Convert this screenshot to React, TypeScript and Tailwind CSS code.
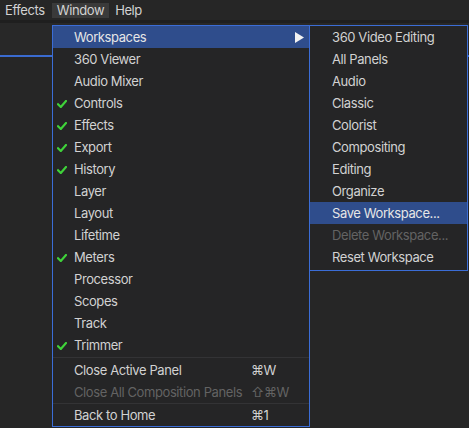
import React from "react";

type Item = { label: string; check?: boolean; shortcut?: string; disabled?: boolean; sub?: boolean; active?: boolean };

const main: Item[] = [
  { label: "Workspaces", sub: true, active: true },
  { label: "360 Viewer" },
  { label: "Audio Mixer" },
  { label: "Controls", check: true },
  { label: "Effects", check: true },
  { label: "Export", check: true },
  { label: "History", check: true },
  { label: "Layer" },
  { label: "Layout" },
  { label: "Lifetime" },
  { label: "Meters", check: true },
  { label: "Processor" },
  { label: "Scopes" },
  { label: "Track" },
  { label: "Trimmer", check: true },
];

const subItems: Item[] = [
  { label: "360 Video Editing" },
  { label: "All Panels" },
  { label: "Audio" },
  { label: "Classic" },
  { label: "Colorist" },
  { label: "Compositing" },
  { label: "Editing" },
  { label: "Organize" },
  { label: "Save Workspace...", active: true },
  { label: "Delete Workspace...", disabled: true },
  { label: "Reset Workspace" },
];

function Check() {
  return (
    <svg width="10" height="8" viewBox="0 0 10 8" className="block">
      <path d="M1 4.2 L3.8 7 L9 1" fill="none" stroke="#3fd23a" strokeWidth="2.2" strokeLinecap="square" />
    </svg>
  );
}

function Row({ it, left }: { it: Item; left: number }) {
  return (
    <div
      className={`relative flex items-center h-[22px] pt-[1px] ${it.active ? "bg-[#2f4d8c] text-[#e6e6e6]" : ""} ${
        it.disabled ? "text-[#636363]" : "text-[#d2d2d2]"
      }`}
    >
      {it.check && (
        <div className="absolute left-[4px] top-[8px]">
          <Check />
        </div>
      )}
      <span style={{ paddingLeft: left }} className="whitespace-nowrap">{it.label}</span>
      {it.shortcut && <span className="absolute left-[198px] whitespace-nowrap">{it.shortcut}</span>}
      {it.sub && (
        <svg width="9" height="11" viewBox="0 0 9 11" className="absolute left-[242px] top-[6px]">
          <path d="M0 0 L9 5.5 L0 11 Z" fill="#f2f2f2" />
        </svg>
      )}
    </div>
  );
}

export default function App() {
  return (
    <div
      className="relative w-[469px] h-[428px] overflow-hidden bg-[#232323] text-[13px] tracking-[-0.4px] leading-none"
      style={{ fontFamily: "Inter, 'Noto Sans', sans-serif" }}
    >
      {/* menu bar */}
      <div className="flex items-center h-[20px] bg-[#262626] text-[#d2d2d2]">
        <div className="pl-[5px] pr-[7px]">Effects</div>
        <div className="h-[15px] flex items-center px-[5px] bg-[#3a3a3a]">Window</div>
        <div className="pl-[6px]">Help</div>
      </div>
      {/* panel header */}
      <div className="h-[37px] bg-[#1f1f1f] pt-[3px]">
        <div className="h-full bg-[#282828] border-b-2 border-[#3a6bd0]" />
      </div>
      <div className="h-full bg-[#262626]" />

      {/* main menu */}
      <div className="absolute left-[52px] top-[25px] w-[258px] border border-[#3b6dd6] bg-[#252526]">
        {main.map((it) => (
          <Row key={it.label} it={it} left={21} />
        ))}
        <div className="h-px bg-[#333335] my-[1px]" />
        <Row it={{ label: "Close Active Panel", shortcut: "⌘W" }} left={21} />
        <Row it={{ label: "Close All Composition Panels", shortcut: "⇧⌘W", disabled: true }} left={21} />
        <div className="h-px bg-[#333335]" />
        <Row it={{ label: "Back to Home", shortcut: "⌘1" }} left={21} />
      </div>

      {/* submenu */}
      <div className="absolute left-[309px] top-[25px] w-[159px] border border-[#3b6dd6] bg-[#252526]">
        {subItems.map((it) => (
          <Row key={it.label} it={it} left={22} />
        ))}
        <div className="h-[2px]" />
      </div>
    </div>
  );
}
